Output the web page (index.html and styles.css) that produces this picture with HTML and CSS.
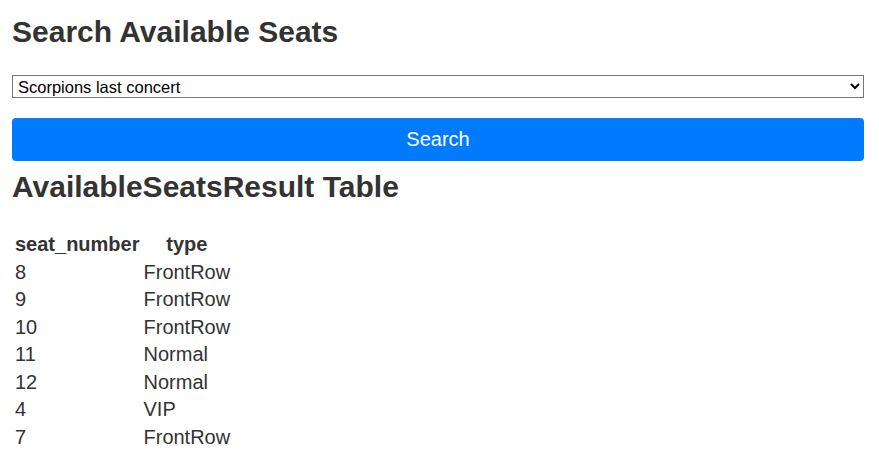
FILE: index.html
```html
<!DOCTYPE html>
<html>
<head>
<meta charset="utf-8">
<link rel="stylesheet" href="styles.css">
</head>
<body>
<div class="page">
  <h1 class="title">Search Available Seats</h1>
  <select class="picker">
    <option>Scorpions last concert</option>
  </select>
  <button class="search-btn">Search</button>
  <h1 class="title result-title">AvailableSeatsResult Table</h1>
  <table class="seats">
    <thead>
      <tr><th>seat_number</th><th>type</th></tr>
    </thead>
    <tbody>
      <tr><td>8</td><td>FrontRow</td></tr>
      <tr><td>9</td><td>FrontRow</td></tr>
      <tr><td>10</td><td>FrontRow</td></tr>
      <tr><td>11</td><td>Normal</td></tr>
      <tr><td>12</td><td>Normal</td></tr>
      <tr><td>4</td><td>VIP</td></tr>
      <tr><td>7</td><td>FrontRow</td></tr>
    </tbody>
  </table>
</div>
</body>
</html>
```

FILE: styles.css
```css
html, body {
  margin: 0;
  padding: 0;
  background: #fff;
}
body {
  font-family: "Liberation Sans", Arial, sans-serif;
  color: #333;
}
.page {
  padding: 0 15px 0 12px;
}
.title {
  font-size: 30px;
  font-weight: bold;
  margin: 0;
  padding-top: 15px;
  line-height: 34px;
}
.picker {
  display: block;
  width: 100%;
  margin-top: 26px;
  height: 23px;
  font-family: "Liberation Sans", Arial, sans-serif;
  font-size: 16.5px;
  color: #000;
  background: #fff;
  border: 1px solid #767676;
  border-radius: 0;
  padding: 0 1px;
}
.search-btn {
  display: block;
  width: 100%;
  margin-top: 20px;
  height: 43px;
  background: #007bff;
  color: #fff;
  border: none;
  border-radius: 4px;
  font-family: "Liberation Sans", Arial, sans-serif;
  font-size: 20px;
}
.result-title {
  padding-top: 9px;
}
.seats {
  margin-top: 26px;
  border-spacing: 2px;
  font-size: 20px;
}
.seats th, .seats td {
  padding: 1px;
  line-height: 23.5px;
}
.seats td {
  text-align: left;
}
```
